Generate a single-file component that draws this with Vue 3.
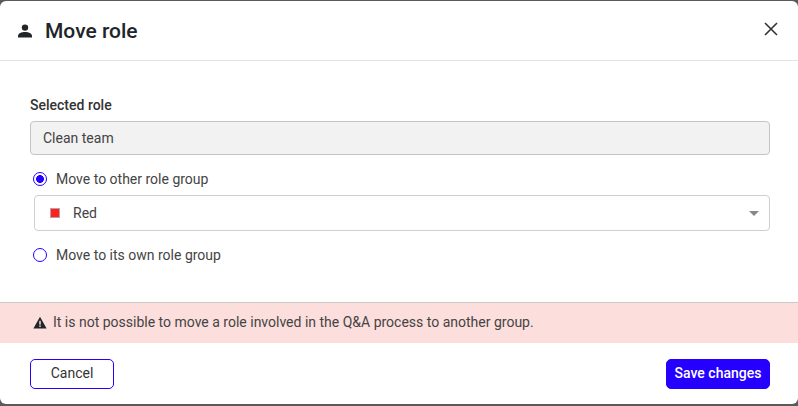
<script setup>
import { ref } from "vue";

const moveTo = ref("other");
</script>

<template>
  <div class="modal">
    <header class="modal-header">
      <div class="title">
        <svg class="user-icon" viewBox="0 0 16 16" width="16" height="16">
          <circle cx="8" cy="4.6" r="3.2" fill="#212529" />
          <path d="M1 14.4v-1.5c0-2.6 3.6-3.9 7-3.9s7 1.3 7 3.9v1.5z" fill="#212529" />
        </svg>
        <h2>Move role</h2>
      </div>
      <button class="close-btn" aria-label="Close">
        <svg viewBox="0 0 14 14" width="14" height="14">
          <path d="M1 1l12 12M13 1L1 13" stroke="#333" stroke-width="1.6" fill="none" />
        </svg>
      </button>
    </header>

    <section class="modal-body">
      <label class="field-label">Selected role</label>
      <div class="readonly-input">Clean team</div>

      <label class="radio-row first-radio">
        <input type="radio" value="other" v-model="moveTo" />
        <span class="radio-mark"></span>
        <span>Move to other role group</span>
      </label>
      <div class="select-box">
        <span class="swatch"></span>
        <span class="select-value">Red</span>
        <span class="caret"></span>
      </div>
      <label class="radio-row second-radio">
        <input type="radio" value="own" v-model="moveTo" />
        <span class="radio-mark"></span>
        <span>Move to its own role group</span>
      </label>
    </section>

    <div class="alert">
      <svg viewBox="0 0 14 13" width="14" height="13">
        <path fill-rule="evenodd" d="M7 .8L13.6 12.4H.4zM6.3 4.8v4h1.4v-4zM6.3 9.5v1.4h1.4V9.5z" fill="#212529" />
      </svg>
      <span>It is not possible to move a role involved in the Q&amp;A process to another group.</span>
    </div>

    <footer class="modal-footer">
      <button class="btn btn-outline">Cancel</button>
      <button class="btn btn-primary">Save changes</button>
    </footer>
  </div>
</template>

<style>
html,
body {
  margin: 0;
  background: #5a5a5a;
}
</style>

<style scoped>
.modal {
  box-sizing: border-box;
  width: 798px;
  height: 403px;
  margin-top: 1px;
  background: #fff;
  border-radius: 6px;
  overflow: hidden;
  display: flex;
  flex-direction: column;
  font-family: Roboto, "Liberation Sans", sans-serif;
  font-size: 14px;
  color: #444;
}

.modal-header {
  box-sizing: border-box;
  height: 60px;
  flex: none;
  border-bottom: 1px solid #e3e3e3;
  display: flex;
  align-items: center;
  justify-content: space-between;
  padding: 0 20px 0 17px;
}

.title {
  display: flex;
  align-items: center;
  gap: 12px;
}

.user-icon {
  display: block;
}

h2 {
  margin: 0;
  font-size: 21px;
  font-weight: 500;
  color: #212529;
}

.close-btn {
  border: none;
  background: none;
  padding: 0;
  margin-bottom: 3px;
  display: flex;
}

.modal-body {
  flex: 1;
  padding: 36px 28px 0 30px;
  display: flex;
  flex-direction: column;
}

.field-label {
  font-weight: 500;
  color: #333;
  line-height: 17px;
  margin-bottom: 7px;
}

.readonly-input {
  box-sizing: border-box;
  height: 34px;
  line-height: 32px;
  padding: 0 12px;
  background: #f2f2f2;
  border: 1px solid #c4c4c4;
  border-radius: 4px;
}

.radio-row {
  display: flex;
  align-items: center;
  gap: 9px;
  line-height: 16px;
  margin-left: 3px;
}

.first-radio {
  margin-top: 16px;
}

.second-radio {
  margin-top: 16px;
}

.radio-row input {
  display: none;
}

.radio-mark {
  box-sizing: border-box;
  width: 14px;
  height: 14px;
  border: 1.5px solid #2600ff;
  border-radius: 50%;
  flex: none;
}

.radio-row input:checked + .radio-mark {
  background: radial-gradient(circle, #2600ff 0 3.6px, #fff 4.2px);
}

.select-box {
  box-sizing: border-box;
  height: 36px;
  margin: 8px 0 0 4px;
  padding: 0 16px 0 15px;
  border: 1px solid #cfcfcf;
  border-radius: 4px;
  display: flex;
  align-items: center;
}

.swatch {
  box-sizing: border-box;
  width: 10px;
  height: 10px;
  background: #ff2020;
  border: 1px solid #b9a0a0;
  margin-right: 13px;
}

.select-value {
  flex: 1;
}

.caret {
  width: 0;
  height: 0;
  margin-right: -6px;
  border-left: 5px solid transparent;
  border-right: 5px solid transparent;
  border-top: 5px solid #888;
}

.alert {
  box-sizing: border-box;
  height: 41px;
  flex: none;
  background: #fcdedc;
  border-top: 1px solid #c9c9c9;
  display: flex;
  align-items: center;
  gap: 6px;
  padding: 0 0 2px 33px;
  font-size: 14px;
}

.modal-footer {
  flex: none;
  height: 61px;
  box-sizing: border-box;
  padding: 16px 28px 0 30px;
  display: flex;
  justify-content: space-between;
  align-items: flex-start;
}

.btn {
  box-sizing: border-box;
  height: 30px;
  border-radius: 5px;
  font-family: inherit;
  font-size: 14px;
  padding: 0 0 2px;
}

.btn-outline {
  width: 84px;
  background: #fff;
  border: 1px solid #2600ff;
  color: #333;
}

.btn-primary {
  width: 104px;
  background: #2600ff;
  border: 1px solid #2600ff;
  color: #fff;
  font-weight: 500;
}
</style>
